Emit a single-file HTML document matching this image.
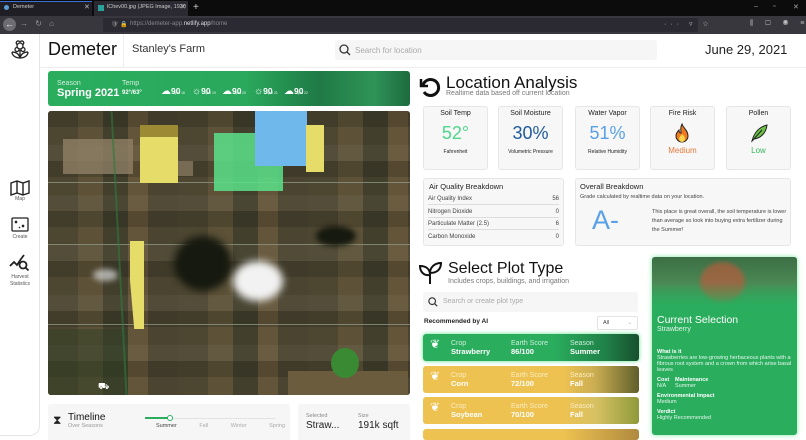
<!DOCTYPE html>
<html style="width:806px;height:440px;overflow:hidden"><head><meta charset="utf-8"><style>
*{box-sizing:border-box;margin:0;padding:0}
body{width:806px;height:440px;overflow:hidden;background:#fff;font-family:"Liberation Sans",sans-serif;position:relative;color:#222}
.a{position:absolute}
.card{position:absolute;background:#f7f7f7;border:1px solid #e6e6e6;border-radius:3px}
.t{font-size:7px;text-align:center}
.row{position:absolute;left:423px;width:216px;height:27px;border-radius:3px;color:#fff;font-size:7px}
.row .c{position:absolute;top:6px;line-height:8px}
.row b{font-size:7.5px}
.aq{position:absolute;left:5px;right:5px;font-size:6px;color:#444;border-bottom:1px solid #ddd;height:12px;line-height:12px}
.aq span{float:right}
.w{position:absolute;top:81px;color:#fff;white-space:nowrap}
.w i{font-style:normal;font-size:10px}
.w b{font-size:8.5px}
.w s{position:absolute;left:12px;top:10px;text-decoration:none;font-size:3.5px;color:#e0f5e8}
</style></head><body>
<!-- browser chrome -->
<div class="a" style="left:0;top:0;width:806px;height:16px;background:#0c0c0d"></div>
<div class="a" style="left:0;top:1px;width:92px;height:15px;background:#1f1e25;border-top:1px solid #3a6fd8"></div>
<div class="a" style="left:4px;top:5px;width:5px;height:5px;border-radius:50%;background:#5b9bd5"></div>
<div class="a" style="left:13px;top:4px;font-size:5.5px;color:#ccc">Demeter</div>
<div class="a" style="left:84px;top:3px;font-size:7px;color:#bbb">✕</div>
<div class="a" style="left:94px;top:1px;width:94px;height:15px;background:#2b2a33"></div>
<div class="a" style="left:98px;top:5px;width:6px;height:6px;background:#2aa19a"></div>
<div class="a" style="left:107px;top:4px;font-size:5.5px;color:#ccc;white-space:nowrap">lChev00.jpg (JPEG Image, 1920</div>
<div class="a" style="left:180px;top:3px;font-size:7px;color:#bbb">✕</div>
<div class="a" style="left:193px;top:2px;font-size:10px;color:#ccc">+</div>
<div class="a" style="left:754px;top:3px;font-size:7px;color:#aaa;white-space:nowrap">–</div>
<div class="a" style="left:773px;top:3px;font-size:7px;color:#aaa">▫</div>
<div class="a" style="left:793px;top:3px;font-size:7px;color:#aaa">✕</div>
<div class="a" style="left:0;top:16px;width:806px;height:18px;background:#38373d"></div>
<div class="a" style="left:3px;top:18px;width:13px;height:13px;border-radius:50%;background:#6d6c72;color:#eee;font-size:9px;text-align:center;line-height:12px">←</div>
<div class="a" style="left:20px;top:19px;font-size:8px;color:#999;word-spacing:5px;white-space:nowrap">→ ↻ ⌂</div>
<div class="a" style="left:103px;top:18px;width:185px;height:14px;background:#2b2a33;border-radius:2px"></div>
<div class="a" style="left:288px;top:18px;width:0"></div>
<div class="a" style="left:103px;top:18px;width:185px;height:14px;background:#2b2a33"></div>
<div class="a" style="left:103px;top:18px;width:185px"></div>
<div class="a" style="left:103px;top:18px;width:185px;height:14px"></div>
<div class="a" style="left:103px;top:18px;width:185px;height:14px;background:#2b2a33"></div>
<div class="a" style="left:103px;top:18px;width:185px;height:14px;background:#2b2a33"></div>
<div class="a" style="left:111px;top:21px;font-size:6px;color:#888;white-space:nowrap">🛡 🔒</div>
<div class="a" style="left:130px;top:21px;font-size:6px;color:#888;white-space:nowrap">https://demeter-app.<span style="color:#ddd">netlify.app</span>/home</div>
<div class="a" style="left:103px;top:18px;width:185px;height:14px"></div>
<div class="a" style="left:288px;top:18px;width:410px;height:14px;background:#2b2a33"></div>
<div class="a" style="left:664px;top:20px;font-size:7px;color:#bbb;letter-spacing:4px;white-space:nowrap">··· ▿ ☆</div>
<div class="a" style="left:750px;top:20px;font-size:7px;color:#bbb;letter-spacing:5px;white-space:nowrap">⫼ ▢ ◉ ≡</div>
<!-- sidebar -->
<div class="a" style="left:0;top:34px;width:40px;height:402px;border-right:1px solid #e5e5e5;border-bottom:1px solid #e5e5e5;border-radius:0 0 10px 0"></div>
<svg class="a" style="left:10px;top:40px" width="20" height="20" viewBox="0 0 20 20" fill="none" stroke="#222" stroke-width="1.3"><circle cx="10" cy="6" r="3"/><path d="M7 4.5a2 2 0 1 1 3-2.5 2 2 0 1 1 3 2.5M7 7.5a2 2 0 1 0 2 2M13 7.5a2 2 0 1 1-2 2M10 10v8M2 12c4 0 7 2 8 6M18 12c-4 0-7 2-8 6M2 12c0 3 3 6 8 6M18 12c0 3-3 6-8 6"/></svg>
<svg class="a" style="left:10px;top:180px" width="20" height="16" viewBox="0 0 20 16" fill="none" stroke="#222" stroke-width="1.4"><path d="M1 3l6-2 6 2 6-2v12l-6 2-6-2-6 2zM7 1v12M13 3v12"/></svg>
<div class="a t" style="left:0;top:196px;width:40px;font-size:5px;color:#555">Map</div>
<svg class="a" style="left:11px;top:217px" width="18" height="15" viewBox="0 0 18 15" fill="none" stroke="#222" stroke-width="1.3"><rect x="1" y="1" width="16" height="13" rx="1"/><path d="M4 4l2 2M6 4l-2 2M11 8l2 2M13 8l-2 2M8 10l1 1" /></svg>
<div class="a t" style="left:0;top:234px;width:40px;font-size:5px;color:#555">Create</div>
<svg class="a" style="left:9px;top:254px" width="22" height="18" viewBox="0 0 22 18" fill="none" stroke="#222" stroke-width="1.8"><path d="M1 12l4-4 3 3 4-6M15 1l-3 4"/><circle cx="14" cy="11" r="3.5"/><path d="M16.5 13.5l3 3"/></svg>
<div class="a t" style="left:0;top:274px;width:40px;font-size:5px;color:#555;line-height:7px">Harvest<br>Statistics</div>
<!-- header -->
<div class="a" style="left:40px;top:67px;width:766px;height:1px;background:#eee"></div>
<div class="a" style="left:48px;top:39px;font-size:18px;color:#111">Demeter</div>
<div class="a" style="left:123px;top:34px;width:1px;height:33px;background:#eee"></div>
<div class="a" style="left:132px;top:43px;font-size:11px;color:#333">Stanley's Farm</div>
<div class="a" style="left:335px;top:40px;width:322px;height:20px;background:#f6f6f6;border-radius:3px"></div>
<svg class="a" style="left:339px;top:44px" width="12" height="12" viewBox="0 0 12 12" fill="none" stroke="#333" stroke-width="1.3"><circle cx="5" cy="5" r="4"/><path d="M8 8l3 3"/></svg>
<div class="a" style="left:355px;top:46px;font-size:8px;color:#aaa">Search for location</div>
<div class="a" style="left:705px;top:42px;font-size:13px;color:#222">June 29, 2021</div>
<!-- weather -->
<div class="a" style="left:48px;top:71px;width:362px;height:35px;border-radius:3px;background:linear-gradient(90deg,#2aae5e 0%,#2aa85c 55%,#1f7a45 75%,#2f9356 90%,#1d6b3e 100%)"></div>
<div class="a" style="left:57px;top:80px;font-size:7px;color:#cfeedd">Season</div>
<div class="a" style="left:57px;top:87px;font-size:11px;color:#fff;font-weight:bold">Spring 2021</div>
<div class="a" style="left:122px;top:80px;font-size:7px;color:#cfeedd">Temp</div>
<div class="a" style="left:122px;top:90px;font-size:6px;color:#fff;font-weight:bold">92°/63°</div>
<div class="w" style="left:161px"><i>☁</i><b>90</b><s>April 18</s></div>
<div class="w" style="left:192px"><i>☼</i><b>90</b><s>April 19</s></div>
<div class="w" style="left:222px"><i>☁</i><b>90</b><s>April 20</s></div>
<div class="w" style="left:254px"><i>☼</i><b>90</b><s>April 21</s></div>
<div class="w" style="left:284px"><i>☁</i><b>90</b><s>April 22</s></div>
<!-- map -->
<div class="a" style="left:48px;top:111px;width:362px;height:284px;border-radius:3px;overflow:hidden;background:#4f4733">
<div class="a" style="left:0;top:0;width:362px;height:284px;background:repeating-linear-gradient(90deg,#4d4631 0 30px,#5d5238 30px 55px,#423f2c 55px 80px,#635539 80px 100px,#4a4430 100px 130px)"></div>
<div class="a" style="left:0;top:0;width:362px;height:284px;background:repeating-linear-gradient(0deg,transparent 0 18px,rgba(0,0,0,.15) 18px 34px,rgba(255,255,255,.04) 34px 50px)"></div>
<div class="a" style="left:0;top:0;width:362px;height:284px;background:linear-gradient(0deg,transparent 70px,rgba(140,150,130,.8) 70px 71px,transparent 71px),linear-gradient(0deg,transparent 150px,rgba(140,150,130,.8) 150px 151px,transparent 151px),linear-gradient(0deg,transparent 212px,rgba(140,150,130,.8) 212px 213px,transparent 213px)"></div>
<div class="a" style="left:15px;top:28px;width:70px;height:35px;background:#8f7f65;opacity:.8"></div>
<div class="a" style="left:95px;top:50px;width:50px;height:15px;background:#8f7f65;opacity:.7"></div>
<div class="a" style="left:0;top:218px;width:80px;height:66px;background:#2f3f24;opacity:.5"></div>
<div class="a" style="left:240px;top:260px;width:120px;height:24px;background:#6b5c3e"></div>
<div class="a" style="left:283px;top:237px;width:28px;height:30px;border-radius:50%;background:#3a8a34"></div>
<div class="a" style="left:126px;top:125px;width:58px;height:55px;border-radius:50%;background:#16190f;filter:blur(4px)"></div>
<div class="a" style="left:268px;top:115px;width:40px;height:20px;border-radius:50%;background:#16190f;filter:blur(3px)"></div>
<div class="a" style="left:185px;top:150px;width:50px;height:40px;border-radius:50%;background:#f2f2f2;filter:blur(4px)"></div>
<div class="a" style="left:45px;top:158px;width:25px;height:12px;border-radius:50%;background:#ddd;filter:blur(3px);opacity:.7"></div>
<div class="a" style="left:70px;top:0;width:2px;height:284px;background:#2e7a3e;opacity:.6;transform:skewX(3deg)"></div>
<div class="a" style="left:92px;top:14px;width:38px;height:58px;background:#e5dc6a"></div>
<div class="a" style="left:92px;top:14px;width:38px;height:12px;background:#9c8a35"></div>
<div class="a" style="left:166px;top:22px;width:69px;height:58px;background:#5be28a;opacity:.85"></div>
<div class="a" style="left:207px;top:0;width:52px;height:55px;background:#6fb8ec"></div>
<div class="a" style="left:258px;top:14px;width:18px;height:47px;background:#e5dc6a"></div>
<div class="a" style="left:82px;top:130px;width:14px;height:88px;background:#e5dc6a;clip-path:polygon(0 0,100% 0,100% 100%,30% 100%,0 45%)"></div>
<div class="a" style="left:50px;top:270px;font-size:9px;color:#fff">⛟</div>
</div>
<!-- timeline -->
<div class="card" style="left:48px;top:404px;width:242px;height:40px;border:none;background:#f6f6f6"></div>
<div class="a" style="left:53px;top:413px;font-size:12px">⧗</div>
<div class="a" style="left:68px;top:412px;font-size:10px;color:#111">Timeline</div>
<div class="a" style="left:68px;top:423px;font-size:5.5px;color:#999">Over Seasons</div>
<div class="a" style="left:145px;top:418px;width:130px;height:1px;background:#e3e3e3"></div>
<div class="a" style="left:145px;top:417px;width:25px;height:2px;background:#2aae5e"></div>
<div class="a" style="left:167px;top:414.5px;width:6px;height:6px;border-radius:50%;border:1.2px solid #2aae5e;background:#fff"></div>
<div class="a" style="left:156px;top:423px;font-size:5.5px;color:#444;word-spacing:21px;white-space:nowrap">Summer <span style="color:#aaa">Fall Winter Spring</span></div>
<div class="card" style="left:298px;top:404px;width:112px;height:40px;border:none;background:#f6f6f6"></div>
<div class="a" style="left:306px;top:413px;font-size:5.5px;color:#888">Selected</div>
<div class="a" style="left:306px;top:420px;font-size:10px;color:#222">Straw...</div>
<div class="a" style="left:358px;top:413px;font-size:5.5px;color:#888">Size</div>
<div class="a" style="left:358px;top:420px;font-size:10px;color:#222">191k sqft</div>
<!-- location analysis -->
<svg class="a" style="left:419px;top:76px" width="22" height="22" viewBox="0 0 22 22" fill="none" stroke="#111" stroke-width="3"><path d="M4 9a8 8 0 1 1 1 7"/><path d="M2 3v7h7" stroke-width="2.5"/></svg>
<div class="a" style="left:446px;top:73px;font-size:17px;color:#111">Location Analysis</div>
<div class="a" style="left:446px;top:90px;font-size:7px;color:#777">Realtime data based off current location</div>
<div class="card" style="left:423px;top:106px;width:65px;height:64px"></div>
<div class="card" style="left:498px;top:106px;width:65px;height:64px"></div>
<div class="card" style="left:575px;top:106px;width:65px;height:64px"></div>
<div class="card" style="left:650px;top:106px;width:65px;height:64px"></div>
<div class="card" style="left:726px;top:106px;width:65px;height:64px"></div>
<div class="a t" style="left:423px;top:110px;width:65px;font-size:7px">Soil Temp</div>
<div class="a t" style="left:498px;top:110px;width:65px;font-size:7px">Soil Moisture</div>
<div class="a t" style="left:575px;top:110px;width:65px;font-size:7px">Water Vapor</div>
<div class="a t" style="left:650px;top:110px;width:65px;font-size:7px">Fire Risk</div>
<div class="a t" style="left:726px;top:110px;width:65px;font-size:7px">Pollen</div>
<div class="a t" style="left:423px;top:123px;width:65px;font-size:18px;color:#4ed68a">52°</div>
<div class="a t" style="left:498px;top:123px;width:65px;font-size:18px;color:#1f5a9a">30%</div>
<div class="a t" style="left:575px;top:123px;width:65px;font-size:18px;color:#5aa0e6">51%</div>
<div class="a t" style="left:423px;top:149px;width:65px;font-size:5px">Fahrenheit</div>
<div class="a t" style="left:498px;top:149px;width:65px;font-size:5px">Volumetric Pressure</div>
<div class="a t" style="left:575px;top:149px;width:65px;font-size:5px">Relative Humidity</div>
<svg class="a" style="left:674px;top:123px" width="16" height="20" viewBox="0 0 16 20"><path d="M8 1c1 4 6 6 6 12a6 6 0 0 1-12 0c0-3 2-5 3-6 0 2 1 3 2 3C7 7 6 4 8 1z" fill="#f07b1f" stroke="#222" stroke-width="1"/><path d="M8 11c2 2 3 3 3 5a3 3 0 0 1-6 0c0-2 2-3 3-5z" fill="#ffd34a"/></svg>
<div class="a t" style="left:650px;top:146px;width:65px;font-size:8px;color:#e6793a">Medium</div>
<svg class="a" style="left:749px;top:123px" width="20" height="20" viewBox="0 0 20 20"><path d="M3 18C5 10 10 4 18 2c-1 8-6 13-13 14z" fill="#6cc24a" stroke="#222" stroke-width="1"/><path d="M3 18L13 7" stroke="#222" stroke-width="1"/></svg>
<div class="a t" style="left:726px;top:146px;width:65px;font-size:8px;color:#3ab45c">Low</div>
<div class="card" style="left:423px;top:178px;width:141px;height:68px"></div>
<div class="a" style="left:429px;top:182px;font-size:7.5px;color:#222">Air Quality Breakdown</div>
<div class="a" style="left:423px;top:193px;width:141px;height:60px">
<div class="aq" style="top:0">Air Quality Index<span>56</span></div>
<div class="aq" style="top:13px">Nitrogen Dioxide<span>0</span></div>
<div class="aq" style="top:25px">Particulate Matter (2.5)<span>6</span></div>
<div class="aq" style="top:38px;border:none">Carbon Monoxide<span>0</span></div></div>
<div class="card" style="left:575px;top:178px;width:216px;height:68px"></div>
<div class="a" style="left:580px;top:182px;font-size:7.5px;color:#222">Overall Breakdown</div>
<div class="a" style="left:580px;top:194px;font-size:5.5px;color:#444">Grade calculated by realtime data on your location.</div>
<div class="a" style="left:592px;top:205px;font-size:27px;color:#5aa0e6">A-</div>
<div class="a" style="left:652px;top:208px;width:138px;font-size:5.5px;line-height:9px;color:#444">This place is great overall, the soil temperature is lower than average so look into buying extra fertilizer during the Summer!</div>
<!-- select plot -->
<svg class="a" style="left:419px;top:261px" width="24" height="24" viewBox="0 0 24 24" fill="none" stroke="#111" stroke-width="2"><path d="M11 23V9M11 14C5 15 1 11 1 5c6 0 10 3 10 9zM11 12c0-6 5-10 11-10 0 7-5 10-11 10z"/></svg>
<div class="a" style="left:448px;top:260px;font-size:16px;color:#111">Select Plot Type</div>
<div class="a" style="left:448px;top:278px;font-size:7px;color:#777">Includes crops, buildings, and irrigation</div>
<div class="a" style="left:423px;top:292px;width:215px;height:20px;background:#f6f6f6;border-radius:3px"></div>
<svg class="a" style="left:428px;top:297px" width="10" height="10" viewBox="0 0 12 12" fill="none" stroke="#333" stroke-width="1.4"><circle cx="5" cy="5" r="4"/><path d="M8 8l3 3"/></svg>
<div class="a" style="left:443px;top:298px;font-size:7px;color:#aaa">Search or create plot type</div>
<div class="a" style="left:424px;top:318px;font-size:6.5px;color:#222;font-weight:bold">Recommended by AI</div>
<div class="a" style="left:597px;top:316px;width:41px;height:14px;border:1px solid #e3e3e3;border-radius:2px;font-size:5.5px;padding:3px 5px;color:#444">All<span style="float:right;color:#aaa">⌄</span></div>
<div class="row" style="top:334px;background:linear-gradient(90deg,#2aae5e 60%,#1f8047 85%,#17502e);box-shadow:0 0 4px #5be28a"><div class="c" style="left:7px;top:6px;font-size:12px">❦</div><div class="c" style="left:28px;color:#cdeedb">Crop<br><b style="color:#fff">Strawberry</b></div><div class="c" style="left:88px;color:#cdeedb">Earth Score<br><b style="color:#fff">86/100</b></div><div class="c" style="left:147px;color:#cdeedb">Season<br><b style="color:#fff">Summer</b></div></div>
<div class="row" style="top:366px;background:linear-gradient(90deg,#edc251 65%,#c9ac52 80%,#5f5f2a)"><div class="c" style="left:7px;font-size:12px">❦</div><div class="c" style="left:28px;color:#fbecc0">Crop<br><b style="color:#fff">Corn</b></div><div class="c" style="left:88px;color:#fbecc0">Earth Score<br><b style="color:#fff">72/100</b></div><div class="c" style="left:147px;color:#fbecc0">Season<br><b style="color:#fff">Fall</b></div></div>
<div class="row" style="top:397px;background:linear-gradient(90deg,#edc251 65%,#d7c163 80%,#8f9a3a)"><div class="c" style="left:7px;font-size:12px">❦</div><div class="c" style="left:28px;color:#fbecc0">Crop<br><b style="color:#fff">Soybean</b></div><div class="c" style="left:88px;color:#fbecc0">Earth Score<br><b style="color:#fff">70/100</b></div><div class="c" style="left:147px;color:#fbecc0">Season<br><b style="color:#fff">Fall</b></div></div>
<div class="row" style="top:429px;height:11px;background:linear-gradient(90deg,#edc251 65%,#b08a3e)"></div>
<!-- current selection -->
<div class="a" style="left:652px;top:257px;width:145px;height:178px;border-radius:3px;background:#2aae5e;box-shadow:0 0 5px #7be6a0;overflow:hidden">
<div class="a" style="left:0;top:0;width:145px;height:55px;background:linear-gradient(180deg,#3c6e45 0%,#4c8a55 50%,#2aae5e 100%)"></div>
<div class="a" style="left:48px;top:5px;width:45px;height:40px;border-radius:50%;background:#b05e3e;opacity:.75;filter:blur(2px)"></div>
<div class="a" style="left:0;top:25px;width:145px;height:30px;background:linear-gradient(180deg,rgba(42,174,94,0),#2aae5e)"></div>
<div class="a" style="left:5px;top:57px;font-size:10.5px;color:#fff">Current Selection</div>
<div class="a" style="left:5px;top:69px;font-size:7px;color:#dff5e8">Strawberry</div>
<div class="a" style="left:5px;top:92px;width:138px;font-size:5.5px;line-height:6px;color:#e5f7ec"><b style="color:#fff">What is it</b><br>Strawberries are low-growing herbaceous plants with a fibrous root system and a crown from which arise basal leaves</div>
<div class="a" style="left:5px;top:120px;font-size:5.5px;line-height:6px;color:#e5f7ec"><b style="color:#fff">Cost</b><br>N/A</div>
<div class="a" style="left:23px;top:120px;font-size:5.5px;line-height:6px;color:#e5f7ec"><b style="color:#fff">Maintenance</b><br>Summer</div>
<div class="a" style="left:5px;top:136px;font-size:5.5px;line-height:6px;color:#e5f7ec"><b style="color:#fff">Environmental Impact</b><br>Medium</div>
<div class="a" style="left:5px;top:152px;font-size:5.5px;line-height:6px;color:#e5f7ec"><b style="color:#fff">Verdict</b><br>Highly Recommended</div>
</div>
</body></html>
